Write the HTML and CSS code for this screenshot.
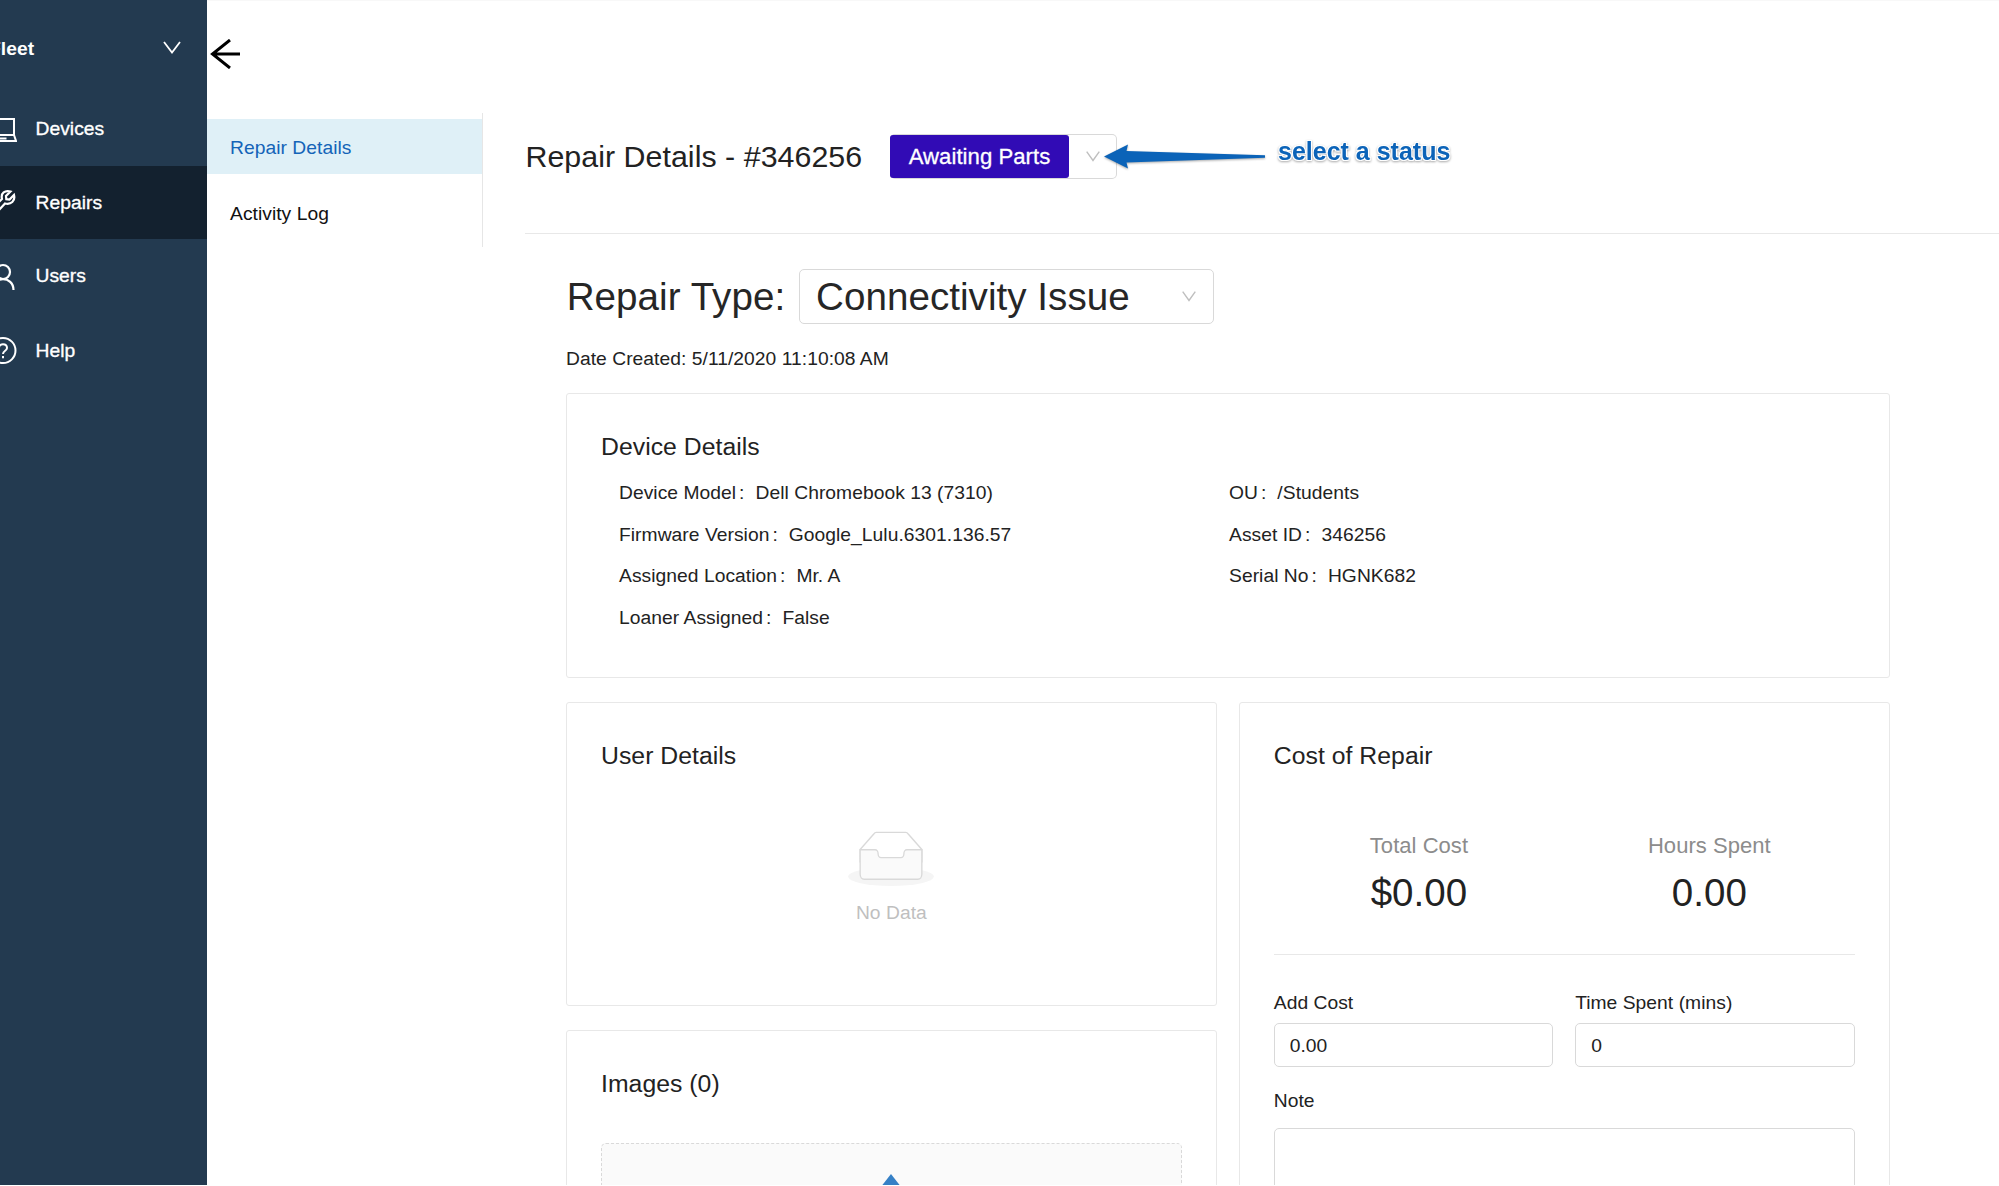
FILE: index.html
```html
<!DOCTYPE html>
<html lang="en">
<head>
<meta charset="utf-8">
<title>Repair Details</title>
<link rel="stylesheet" href="styles.css">
</head>
<body>
<div class="app">
  <nav class="sidebar">
    <div class="brand"><span class="brand-name">Fleet</span>
      <svg class="brand-chevron" width="18" height="13" viewBox="0 0 18 13"><path d="M1 1l8 10.5L17 1" fill="none" stroke="#fff" stroke-width="1.8"/></svg>
    </div>
    <a class="nav-item"><svg class="nav-icon" viewBox="0 0 28 28"><path d="M4 4h21v16H4zM4 20l-2 6h25l-2-6M9 23.500h8.500" fill="none" stroke="#fff" stroke-width="2"/></svg><span>Devices</span></a>
    <a class="nav-item active"><svg class="nav-icon" viewBox="0 0 28 28"><path d="M21.500 3.500l-4.500 4.500.3 3.200 3.200.3 4.500-4.500c1.500 6-3 10-9 8.500L8 24l-4-4 9-9C11.500 5 16 2 21.500 3.500z" fill="none" stroke="#fff" stroke-width="2.200"/></svg><span>Repairs</span></a>
    <a class="nav-item"><svg class="nav-icon" viewBox="0 0 28 28"><circle cx="14" cy="10" r="7" fill="none" stroke="#fff" stroke-width="2.200"/><path d="M3.500 28c0-14.500 21-14.500 21 0" fill="none" stroke="#fff" stroke-width="2.200"/></svg><span>Users</span></a>
    <a class="nav-item help"><svg class="nav-icon" viewBox="0 0 28 28"><circle cx="14" cy="14.500" r="12.500" fill="none" stroke="#fff" stroke-width="2"/><path d="M10 12c0-5 8-5 8 0 0 3-4 2.500-4 6M14 20v2.300" fill="none" stroke="#fff" stroke-width="2"/></svg><span>Help</span></a>
  </nav>
  <div class="page">
    <svg class="back" width="31" height="30" viewBox="0 0 31 30"><path d="M20 1L2.500 15 20 29M2.500 15H30" fill="none" stroke="#000" stroke-width="3"/></svg>
    <div class="columns">
      <aside class="submenu"><a class="sub-item selected">Repair Details</a><a class="sub-item">Activity Log</a></aside>
      <main class="main">
        <header class="title-row">
          <h1>Repair Details - #346256</h1>
          <div class="status-select"><span class="tag">Awaiting Parts</span><svg class="chevron" width="14" height="11" viewBox="0 0 14 11"><path d="M.7.700L7 9.500 13.300.7" fill="none" stroke="#bfbfbf" stroke-width="1.400"/></svg></div>
          <div class="callout">
            <svg width="164" height="30" viewBox="0 0 164 30"><path d="M2 14.500L26 2.500 24.500 9 163 13.200v2.600L24.500 20.500 26 26.500z" fill="#0b63b8"/></svg>
            <span>select a status</span>
          </div>
        </header>
        <div class="content">
          <div class="type-row"><span>Repair Type:</span><div class="type-select"><span>Connectivity Issue</span><svg class="chevron" width="14" height="11" viewBox="0 0 14 11"><path d="M.7.700L7 9.500 13.300.7" fill="none" stroke="#bfbfbf" stroke-width="1.400"/></svg></div></div>
          <p class="created">Date Created: 5/11/2020 11:10:08 AM</p>
          <section class="card device">
            <h2>Device Details</h2>
            <div class="facts">
              <dl><dt>Device Model</dt><dd>Dell Chromebook 13 (7310)</dd></dl><dl><dt>OU</dt><dd>/Students</dd></dl>
              <dl><dt>Firmware Version</dt><dd>Google_Lulu.6301.136.57</dd></dl><dl><dt>Asset ID</dt><dd>346256</dd></dl>
              <dl><dt>Assigned Location</dt><dd>Mr. A</dd></dl><dl><dt>Serial No</dt><dd>HGNK682</dd></dl>
              <dl><dt>Loaner Assigned</dt><dd>False</dd></dl>
            </div>
          </section>
          <div class="halves">
            <div class="stack">
              <section class="card user">
                <h2>User Details</h2>
                <div class="empty">
                  <svg width="86" height="55" viewBox="0 0 64 41"><g transform="translate(0 1)" fill="none" fill-rule="evenodd"><ellipse fill="#f5f5f5" cx="32" cy="33" rx="32" ry="7"/><g stroke="#d9d9d9"><path d="M55 12.760L44.854 1.258C44.367.474 43.656 0 42.907 0H21.093c-.749 0-1.460.474-1.947 1.257L9 12.761V22h46v-9.240z" fill="#fff"/><path d="M41.613 15.931c0-1.605.994-2.930 2.227-2.931H55v18.137C55 33.260 53.680 35 52.050 35h-40.100C10.320 35 9 33.259 9 31.137V13h11.160c1.233 0 2.227 1.323 2.227 2.928v.022c0 1.605 1.005 2.901 2.237 2.901h14.752c1.232 0 2.237-1.308 2.237-2.913v-.007z" fill="#fafafa"/></g></g></svg>
                  <span>No Data</span>
                </div>
              </section>
              <section class="card images">
                <h2>Images (0)</h2>
                <div class="dropzone"><svg width="60" height="50" viewBox="0 0 60 50"><path d="M30 0l18 23H12z" fill="#3680c6"/></svg></div>
              </section>
            </div>
            <section class="card cost">
              <h2>Cost of Repair</h2>
              <div class="stats">
                <div><span class="stat-label">Total Cost</span><span class="stat-value">$0.00</span></div>
                <div><span class="stat-label">Hours Spent</span><span class="stat-value">0.00</span></div>
              </div>
              <div class="fields">
                <label>Add Cost<input type="text" value="0.00"></label>
                <label>Time Spent (mins)<input type="text" value="0"></label>
              </div>
              <label class="note">Note<textarea></textarea></label>
            </section>
          </div>
        </div>
      </main>
    </div>
  </div>
</div>
</body>
</html>
```

FILE: styles.css
```css
* { box-sizing: border-box; }
html, body { height: 100%; overflow: hidden; }
body { margin: 0; background: #fff; color: #222; font: 19.25px/27px "Liberation Sans", Arial, sans-serif; letter-spacing: .04px; }
h1, h2, p, dl, dd { margin: 0; font-weight: 400; }
svg { flex: none; display: block; }
.app { display: flex; height: 1185px; overflow: hidden; }

.sidebar { flex: none; width: 207px; background: #233a50; color: #fff; overflow: hidden; -webkit-text-stroke: .35px #fff; }
.brand { display: flex; justify-content: space-between; height: 92px; padding: 35px 26px 0 0; margin-left: -11px; font-weight: 700; -webkit-text-stroke: 0; }
.brand-chevron { margin-top: 6px; }
.nav-item { display: flex; align-items: center; height: 73.500px; }
.nav-item.active { background: #13212f; }
.nav-item.help { margin-top: 1px; }
.nav-icon { width: 28px; height: 28px; margin-left: -11px; margin-right: 18.500px; }

.page { flex: 1; min-width: 0; box-shadow: inset 0 1px 1px #f8f8f8; }
.back { margin: 39px 0 0 3px; }
.columns { display: flex; margin-top: 44px; }
.submenu { flex: none; width: 276px; height: 134px; padding-top: 6px; border-right: 1px solid #e6e6e6; color: #111; }
.sub-item { display: block; height: 55px; margin-bottom: 11px; padding-left: 23px; line-height: 57px; }
.sub-item.selected { background: #dff0f7; color: #1464b8; }

.main { flex: 1; min-width: 0; padding-left: 42px; }
.title-row { display: flex; align-items: center; height: 121px; padding-bottom: 33px; border-bottom: 1.400px solid #e8e8e8; position: relative; }
h1 { width: 365px; padding-left: .5px; font-size: 30.350px; white-space: nowrap; }
.status-select { display: flex; align-items: center; gap: 17px; width: 227px; height: 45px; border: 1.400px solid #d9d9d9; border-radius: 5px; border-left: 0; }
.tag { width: 179px; height: 43px; line-height: 44px; text-align: center; border-radius: 3px; background: #310bb5; color: #fff; font-size: 22.150px; -webkit-text-stroke: .3px #fff; }
.callout { position: absolute; left: 577px; top: 23px; display: flex; color: #0b63b8; font-weight: 700; font-size: 25px; letter-spacing: 0; filter: drop-shadow(0 1px 1px #0005); }
.callout svg { margin-top: 6px; }
.callout span { margin: 1px 0 0 12px; line-height: 28px; white-space: nowrap; text-shadow: 1px 1px #fff, -1px 1px #fff, 1px -1px #fff, -1px -1px #fff; }

.content { width: 1364.500px; padding-left: 41px; }
.type-row { display: flex; align-items: center; height: 55px; margin-top: 35px; font-size: 38.600px; color: #262626; }
.type-row > span { width: 233px; padding-left: .7px; white-space: nowrap; }
.type-select { display: flex; align-items: center; justify-content: space-between; width: 415px; height: 55px; padding: 0 17px 0 16px; border: 1.400px solid #d9d9d9; border-radius: 5px; }
.created { margin-top: 21px; }

.card { border: 1.400px solid #e8e8e8; border-radius: 3px; padding: 0 34px; }
h2 { font-size: 24.750px; line-height: 36px; padding-top: 35px; }
.device { height: 285px; margin-top: 21px; }
.facts { display: grid; grid-template-columns: 610px 1fr; grid-auto-rows: 41.500px; padding: 7px 0 0 18px; }
dl { display: flex; align-items: center; white-space: nowrap; }
dt::after { content: ":"; margin: 0 11px 0 3px; }
.halves { display: grid; grid-template-columns: 1fr 1fr; gap: 22px; margin-top: 24px; }
.stack { display: grid; grid-template-rows: 304px 400px; gap: 24px; }
.empty { display: flex; flex-direction: column; align-items: center; margin-top: 57px; color: #bfbfbf; }
.empty span { margin-top: 13px; }
.dropzone { display: flex; justify-content: center; height: 230px; margin-top: 41px; padding-top: 30px; border: 1.400px dashed #d9d9d9; border-radius: 5px; background: #fafafa; }
.stats { display: grid; grid-template-columns: 1fr 1fr; height: 181px; padding-top: 57px; border-bottom: 1.400px solid #e8e8e8; text-align: center; }
.stat-label, .stat-value { display: block; }
.stat-label { font-size: 22px; line-height: 29px; color: #8c8c8c; }
.stat-value { font-size: 38.500px; line-height: 65px; color: #222; }
.fields { display: grid; grid-template-columns: 1fr 1fr; gap: 22px; margin-top: 34px; }
label { display: block; }
input, textarea { display: block; width: 100%; height: 44px; margin-top: 7px; padding: 1px 15px 0; border: 1.400px solid #d9d9d9; border-radius: 5px; background: #fff; color: #222; font: inherit; outline: 0; }
.note { margin-top: 20px; }
textarea { height: 150px; margin-top: 14px; resize: none; }
```
